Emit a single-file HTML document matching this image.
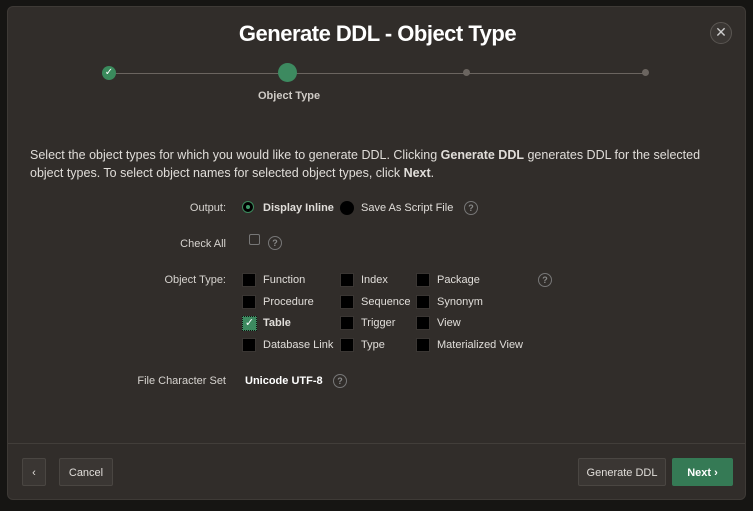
<!DOCTYPE html>
<html><head><style>
body{margin:0;width:753px;height:511px;background:#161513;font-family:"Liberation Sans",sans-serif;color:#e8e6e3;overflow:hidden;position:relative}
.dlg{position:absolute;left:7px;top:6px;width:739px;height:494px;background:#312d2a;border:1px solid #3e3a36;border-radius:6px;box-sizing:border-box}
.abs{position:absolute;white-space:nowrap}
.title{left:0;width:739px;text-align:center;top:14px;font-size:22px;font-weight:bold;color:#fff;letter-spacing:-0.5px}
.close{left:702px;top:15px;width:20px;height:20px;border-radius:50%;border:1px solid #5a5652;background:#3a3633;color:#ccc;text-align:center;line-height:19px;font-size:14px}
.line{height:1px;background:#6b6560;top:66px}
.lbl{font-size:11px;color:#d6d3cf;text-align:right}
.t{font-size:11px;color:#e0ddd9}
.cb{width:12px;height:12px;background:#000;border:1px solid #3a3633}
.help{width:12px;height:12px;border:1.5px solid #777;border-radius:50%;color:#888;font-size:9px;text-align:center;line-height:12px;font-weight:bold}
.btn{top:451px;height:28px;border:1px solid #4a4642;background:#3a3633;border-radius:2px;color:#e0ddd9;font-size:11px;text-align:center;line-height:28px;box-sizing:border-box}
</style></head><body>
<div class="dlg">
<div class="abs title">Generate DDL - Object Type</div>
<div class="abs close">✕</div>
<div class="abs line" style="left:102px;width:537px"></div>
<div class="abs" style="left:94px;top:59px;width:14px;height:14px;border-radius:50%;background:#3a8a5c;color:#fff;font-size:10px;text-align:center;line-height:14px">✓</div>
<div class="abs" style="left:270px;top:56px;width:19px;height:19px;border-radius:50%;background:#3d8a60"></div>
<div class="abs" style="left:455px;top:62px;width:7px;height:7px;border-radius:50%;background:#6b6560"></div>
<div class="abs" style="left:634px;top:62px;width:7px;height:7px;border-radius:50%;background:#6b6560"></div>
<div class="abs" style="left:250px;top:83px;font-size:11px;font-weight:bold;color:#cfcbc6">Object Type</div>
<div class="abs" style="left:22px;top:139px;font-size:12.5px;line-height:18px;color:#e0ddd9;white-space:normal;width:700px">Select the object types for which you would like to generate DDL. Clicking <b>Generate DDL</b> generates DDL for the selected object types. To select object names for selected object types, click <b>Next</b>.</div>
<div class="abs lbl" style="right:519px;top:195px">Output:</div>
<div class="abs" style="left:234px;top:194px;width:12px;height:12px;border-radius:50%;background:#000;border:1px solid #3a8a5c;box-sizing:border-box"><div style="margin:3px;width:4px;height:4px;border-radius:50%;background:#3d9a68"></div></div>
<div class="abs t" style="left:255px;top:195px;font-weight:bold">Display Inline</div>
<div class="abs" style="left:332px;top:194px;width:14px;height:14px;border-radius:50%;background:#000"></div>
<div class="abs t" style="left:353px;top:195px">Save As Script File</div>
<div class="abs help" style="left:456px;top:194px">?</div>
<div class="abs lbl" style="right:519px;top:231px">Check All</div>
<div class="abs" style="left:241px;top:227px;width:9px;height:9px;border:1px solid #777;border-radius:2px"></div>
<div class="abs help" style="left:260px;top:229px">?</div>
<div class="abs lbl" style="right:519px;top:267px">Object Type:</div>
<div class="abs cb" style="left:234px;top:266px"></div><div class="abs t" style="left:255px;top:267px">Function</div>
<div class="abs cb" style="left:332px;top:266px"></div><div class="abs t" style="left:353px;top:267px">Index</div>
<div class="abs cb" style="left:408px;top:266px"></div><div class="abs t" style="left:429px;top:267px">Package</div>
<div class="abs help" style="left:530px;top:266px">?</div>
<div class="abs cb" style="left:234px;top:288px"></div><div class="abs t" style="left:255px;top:289px">Procedure</div>
<div class="abs cb" style="left:332px;top:288px"></div><div class="abs t" style="left:353px;top:289px">Sequence</div>
<div class="abs cb" style="left:408px;top:288px"></div><div class="abs t" style="left:429px;top:289px">Synonym</div>
<div class="abs" style="left:234px;top:309px;width:13px;height:13px;background:#3d8a60;border:1px dotted #111;color:#fff;font-size:11px;text-align:center;line-height:13px">✓</div><div class="abs t" style="left:255px;top:310px;font-weight:bold">Table</div>
<div class="abs cb" style="left:332px;top:309px"></div><div class="abs t" style="left:353px;top:310px">Trigger</div>
<div class="abs cb" style="left:408px;top:309px"></div><div class="abs t" style="left:429px;top:310px">View</div>
<div class="abs cb" style="left:234px;top:331px"></div><div class="abs t" style="left:255px;top:332px">Database Link</div>
<div class="abs cb" style="left:332px;top:331px"></div><div class="abs t" style="left:353px;top:332px">Type</div>
<div class="abs cb" style="left:408px;top:331px"></div><div class="abs t" style="left:429px;top:332px">Materialized View</div>
<div class="abs lbl" style="right:519px;top:368px">File Character Set</div>
<div class="abs t" style="left:237px;top:368px;font-weight:bold;color:#fff">Unicode UTF-8</div>
<div class="abs help" style="left:325px;top:367px">?</div>
<div class="abs" style="left:0;top:436px;width:737px;height:1px;background:#423e3a"></div>
<div class="abs btn" style="left:14px;width:24px">‹</div>
<div class="abs btn" style="left:51px;width:54px">Cancel</div>
<div class="abs btn" style="left:570px;width:88px">Generate DDL</div>
<div class="abs btn" style="left:664px;width:61px;background:#357a55;border-color:#357a55;color:#fff;font-weight:bold">Next ›</div>
</div>
</body></html>
